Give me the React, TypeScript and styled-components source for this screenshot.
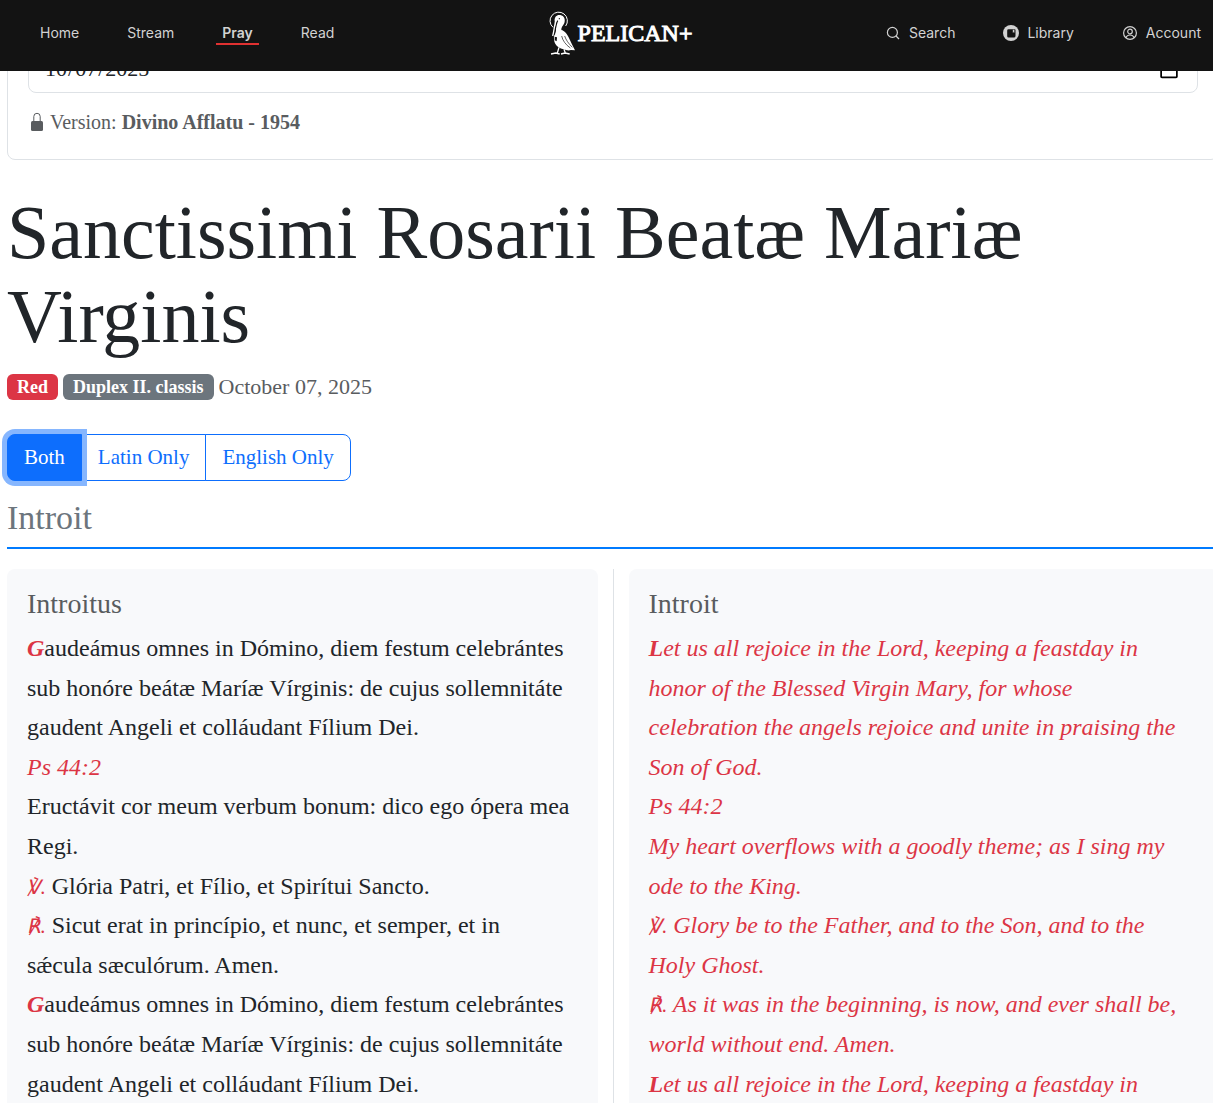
import React, { useState } from "react";
import styled, { createGlobalStyle, css } from "styled-components";

const serif = `"Liberation Serif", "DejaVu Sans", serif`;

const GlobalStyle = createGlobalStyle`
  *, *::before, *::after { box-sizing: border-box; }
  html { overflow-x: hidden; }
  body {
    margin: 0;
    background: #fff;
    color: #212529;
    font-family: ${serif};
    overflow-x: hidden;
  }
  #root { height: 100vh; overflow: hidden; }
  h1, h2, h3, p { margin: 0; font-weight: 400; }
`;

const Header = styled.header`
  position: fixed;
  inset: 0 0 auto 0;
  z-index: 10;
  height: 71px;
  padding: 0 12px 6px 40px;
  display: grid;
  grid-template-columns: 1fr auto 1fr;
  align-items: center;
  background: #131313;
  font-family: Inter, sans-serif;
`;

const Nav = styled.nav<{ $end?: boolean }>`
  display: flex;
  gap: 48px;
  justify-content: ${(p) => (p.$end ? "flex-end" : "flex-start")};
`;

const NavLink = styled.a<{ $active?: boolean }>`
  position: relative;
  display: flex;
  align-items: center;
  gap: 8px;
  font-size: 14px;
  line-height: 20px;
  color: #d2d2d2;
  text-decoration: none;
  ${(p) =>
    p.$active &&
    css`
      font-weight: 600;
      &::after {
        content: "";
        position: absolute;
        left: -6px;
        right: -6px;
        bottom: -2px;
        height: 2px;
        background: #e03131;
      }
    `}
`;

const Brand = styled.a`
  display: flex;
  align-items: center;
  gap: 2px;
  color: #fff;
  font-family: "Liberation Serif", serif;
  font-size: 24px;
  line-height: 28px;
  text-decoration: none;
  -webkit-text-stroke: 1px #fff;
`;

const Main = styled.main`
  padding-left: 7px;
  margin-right: -6px;
`;

const FormCard = styled.section`
  padding: 44px 20px 24px;
  border: 1px solid #dee2e6;
  border-radius: 8px;
`;

const DateInput = styled.input`
  display: block;
  width: 100%;
  height: 48px;
  padding: 8px 15px;
  border: 1px solid #dee2e6;
  border-radius: 8px;
  background: #fff;
  color: #212529;
  font-family: ${serif};
  font-size: 22px;
`;

const Version = styled.p`
  display: flex;
  align-items: center;
  gap: 6px;
  && { margin-top: 16px; }
  padding-left: 2px;
  font-size: 20px;
  line-height: 26px;
  color: #595c5f;
`;

const Title = styled.h1`
  && { margin-top: 30px; }
  font-size: 76px;
  line-height: 84px;
`;

const Meta = styled.div`
  display: flex;
  align-items: center;
  gap: 5px;
  margin-top: 16px;
  font-size: 22px;
  line-height: 26px;
  color: #595c5f;
`;

const Badge = styled.span<{ $tone: "red" | "gray" }>`
  padding: 0 10px;
  border-radius: 6px;
  background: ${(p) => (p.$tone === "red" ? "#dc3545" : "#6c757d")};
  color: #fff;
  font-size: 18px;
  font-weight: 700;
`;

const ButtonGroup = styled.div`
  display: flex;
  margin-top: 34px;
`;

const ModeButton = styled.button<{ $active: boolean }>`
  height: 47px;
  padding: 0 16px;
  border: 1px solid #0d6efd;
  background: ${(p) => (p.$active ? "#0d6efd" : "#fff")};
  color: ${(p) => (p.$active ? "#fff" : "#0d6efd")};
  box-shadow: ${(p) => (p.$active ? "0 0 0 5px #86b6fe" : "none")};
  z-index: ${(p) => (p.$active ? 1 : 0)};
  font-family: ${serif};
  font-size: 21px;
  cursor: pointer;
  & + & { margin-left: -1px; }
  &:first-child { border-radius: 8px 0 0 8px; }
  &:last-child { border-radius: 0 8px 8px 0; }
`;

const SectionTitle = styled.h2`
  && { margin-top: 18px; }
  padding-bottom: 10px;
  border-bottom: 2px solid #007bff;
  color: #6c757d;
  font-size: 34px;
  line-height: 38px;
`;

const Columns = styled.div`
  display: grid;
  grid-template-columns: 1fr 1px 1fr;
  gap: 15px;
  margin-top: 20px;
`;

const Divider = styled.div`
  background: #dee2e6;
`;

const Panel = styled.article`
  padding: 20px;
  border-radius: 8px;
  background: #f8f9fb;
`;

const PanelTitle = styled.h3`
  && { margin-bottom: 10px; }
  color: #595c5f;
  font-size: 28px;
  line-height: 30px;
`;

const Verse = styled.p<{ $rubric?: boolean }>`
  font-size: 24px;
  line-height: 1.65;
  ${(p) => p.$rubric && css`color: #dc3545; font-style: italic;`}
`;

const Initial = styled.strong`
  color: #dc3545;
  font-style: italic;
`;

const Sign = styled.em`
  color: #dc3545;
  font-size: 20px;
  line-height: 1;
`;

const Pelican = () => (
  <svg width="27" height="46" viewBox="54 30 81 138" fill="none" aria-hidden="true">
    <path d="M66 82A26 26 0 1 1 104 78" stroke="#fff" strokeWidth="3" />
    <path
      d="M71 62C70 50 78 43 88 45C100 47 104 60 100 69C96 78 90 82 91 90C100 92 109 102 115 116C120 127 126 139 132 151L120 150C112 153 104 150 98 148C82 144 70 135 69 118C68 104 75 98 75 88C74 82 71 74 71 62Z"
      fill="#fff"
    />
    <path d="M80 62C75 70 73 86 70 104" stroke="#131313" strokeWidth="4" />
    <path d="M76 60C70 72 70 90 65 108" stroke="#fff" strokeWidth="4" />
    <circle cx="85" cy="56" r="2" fill="#131313" />
    <path
      d="M92 108C95 122 104 134 118 144M101 108C105 120 112 130 124 142"
      stroke="#131313"
      strokeWidth="2"
    />
    <path d="M71 110l7 2-1 12-6-3z" fill="#131313" />
    <path d="M84 142L79 159M99 148L103 159M60 162L74 159L86 162M90 162L102 159L116 162" stroke="#fff" strokeWidth="4" />
  </svg>
);

const SearchIcon = () => (
  <svg width="16" height="16" viewBox="0 0 16 16" fill="none" stroke="currentColor" aria-hidden="true">
    <circle cx="7.4" cy="7.4" r="5" strokeWidth="1.2" />
    <path d="M11 11L14 14" strokeWidth="1.2" />
  </svg>
);

const LibraryIcon = () => (
  <svg width="16" height="16" viewBox="0 0 16 16" aria-hidden="true">
    <circle cx="8" cy="8" r="8" fill="currentColor" />
    <path d="M5.5 4.3h6.2a.8.8 0 0 1 .8.8v5.8a1.6 1.6 0 0 1-1.6 1.6H5.5a1.3 1.3 0 0 1-1.3-1.3V5.6a1.3 1.3 0 0 1 1.3-1.3z" fill="#131313" />
    <path d="M9.8 4.8h1.6v3l-.8-.6-.8.6z" fill="currentColor" />
  </svg>
);

const AccountIcon = () => (
  <svg width="16" height="16" viewBox="0 0 16 16" fill="none" stroke="currentColor" strokeWidth="1.2" aria-hidden="true">
    <circle cx="8" cy="8" r="6.4" />
    <circle cx="8" cy="6.5" r="2.3" />
    <path d="M3.8 12.6C5 10.3 6.5 10 8 10s3 .3 4.2 2.6" />
  </svg>
);

const LockIcon = () => (
  <svg width="14" height="20" viewBox="0 0 14 20" fill="none" aria-hidden="true">
    <path d="M3.8 10V4.500a3.2 3.2 0 0 1 6.4 0V10" stroke="#595c5f" />
    <rect x="1" y="9" width="12" height="10" rx="1.500" fill="#595c5f" />
  </svg>
);

const modes = ["Both", "Latin Only", "English Only"];

export default function App() {
  const [mode, setMode] = useState("Both");
  const [date, setDate] = useState("2025-10-07");

  return (
    <>
      <GlobalStyle />
      <Header>
        <Nav>
          <NavLink href="#home">Home</NavLink>
          <NavLink href="#stream">Stream</NavLink>
          <NavLink href="#pray" $active>Pray</NavLink>
          <NavLink href="#read">Read</NavLink>
        </Nav>
        <Brand href="#home"><Pelican />PELICAN+</Brand>
        <Nav $end>
          <NavLink href="#search"><SearchIcon />Search</NavLink>
          <NavLink href="#library"><LibraryIcon />Library</NavLink>
          <NavLink href="#account"><AccountIcon />Account</NavLink>
        </Nav>
      </Header>

      <Main>
        <FormCard>
          <DateInput type="date" aria-label="Date" value={date} onChange={(e) => setDate(e.target.value)} />
          <Version>
            <LockIcon />
            <span>Version: <strong>Divino Afflatu - 1954</strong></span>
          </Version>
        </FormCard>

        <Title>Sanctissimi Rosarii Beatæ Mariæ Virginis</Title>
        <Meta>
          <Badge $tone="red">Red</Badge>
          <Badge $tone="gray">Duplex II. classis</Badge>
          <span>October 07, 2025</span>
        </Meta>

        <ButtonGroup role="group" aria-label="Language">
          {modes.map((m) => (
            <ModeButton key={m} type="button" $active={mode === m} aria-pressed={mode === m} onClick={() => setMode(m)}>
              {m}
            </ModeButton>
          ))}
        </ButtonGroup>

        <SectionTitle>Introit</SectionTitle>
        <Columns>
          <Panel lang="la">
            <PanelTitle>Introitus</PanelTitle>
            <Verse><Initial>G</Initial>audeámus omnes in Dómino, diem festum celebrántes sub honóre beátæ Maríæ Vírginis: de cujus sollemnitáte gaudent Angeli et colláudant Fílium Dei.</Verse>
            <Verse $rubric>Ps 44:2</Verse>
            <Verse>Eructávit cor meum verbum bonum: dico ego ópera mea Regi.</Verse>
            <Verse><Sign>℣.</Sign> Glória Patri, et Fílio, et Spirítui Sancto.</Verse>
            <Verse><Sign>℟.</Sign> Sicut erat in princípio, et nunc, et semper, et in<br />sǽcula sæculórum. Amen.</Verse>
            <Verse><Initial>G</Initial>audeámus omnes in Dómino, diem festum celebrántes sub honóre beátæ Maríæ Vírginis: de cujus sollemnitáte gaudent Angeli et colláudant Fílium Dei.</Verse>
          </Panel>
          <Divider />
          <Panel lang="en">
            <PanelTitle>Introit</PanelTitle>
            <Verse $rubric><Initial>L</Initial>et us all rejoice in the Lord, keeping a feastday in honor of the Blessed Virgin Mary, for whose<br />celebration the angels rejoice and unite in praising the<br />Son of God.</Verse>
            <Verse $rubric>Ps 44:2</Verse>
            <Verse $rubric>My heart overflows with a goodly theme; as I sing my ode to the King.</Verse>
            <Verse $rubric><Sign>℣.</Sign> Glory be to the Father, and to the Son, and to the<br />Holy Ghost.</Verse>
            <Verse $rubric><Sign>℟.</Sign> As it was in the beginning, is now, and ever shall be, world without end. Amen.</Verse>
            <Verse $rubric><Initial>L</Initial>et us all rejoice in the Lord, keeping a feastday in</Verse>
          </Panel>
        </Columns>
      </Main>
    </>
  );
}
